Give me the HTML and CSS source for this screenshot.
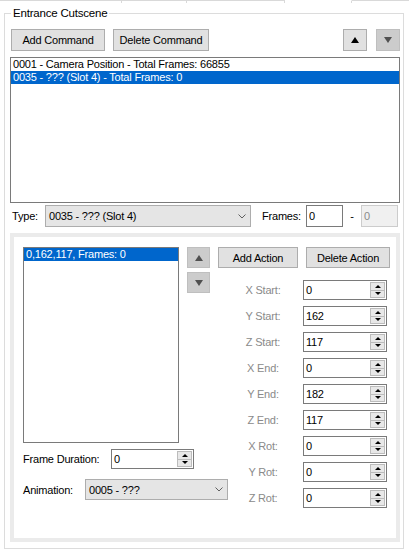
FILE: index.html
```html
<!DOCTYPE html>
<html lang="en">
<head>
    <meta charset="UTF-8">
    <meta name="viewport" content="width=device-width, initial-scale=1.0">
    <title>Entrance Cutscene</title>
    <link rel="stylesheet" href="styles.css">
</head>
<body>

    <!-- bottoms of the tab headers above the page -->
    <div class="tabs">
        <div class="tab tab-1"></div>
        <div class="tab tab-2"></div>
        <div class="tab tab-3"></div>
        <div class="tab tab-active"></div>
        <div class="tab tab-last"></div>
    </div>

    <fieldset class="group">
        <legend>Entrance Cutscene</legend>

        <div class="toolbar">
            <button class="btn btn-add-cmd">Add Command</button>
            <button class="btn btn-del-cmd">Delete Command</button>
            <div class="spacer"></div>
            <button class="arrow-btn"><span class="tri-up"></span></button>
            <button class="arrow-btn arrow-last disabled"><span class="tri-down"></span></button>
        </div>

        <div class="listbox command-list">
            <div class="item">0001 - Camera Position - Total Frames: 66855</div>
            <div class="item selected">0035 - ??? (Slot 4) - Total Frames: 0</div>
        </div>

        <div class="type-row">
            <span class="type-lbl">Type:</span>
            <div class="combo type-combo">
                <span>0035 - ??? (Slot 4)</span>
                <svg class="chevron" width="8" height="5" viewBox="0 0 8 5"><polyline points="0.5,0.5 4,4 7.5,0.5" fill="none" stroke="#606060" stroke-width="1"/></svg>
            </div>
            <span class="frames-lbl">Frames:</span>
            <input class="textbox" type="text" value="0">
            <span class="dash">-</span>
            <input class="textbox" type="text" value="0" disabled>
        </div>

        <!-- action editor -->
        <div class="panel">
            <div class="panel-left">
                <div class="action-top">
                    <div class="listbox action-list">
                        <div class="item selected">0,162,117, Frames: 0</div>
                    </div>
                    <div class="arrows">
                        <button class="arrow-btn small disabled"><span class="tri-up"></span></button>
                        <button class="arrow-btn small disabled"><span class="tri-down"></span></button>
                    </div>
                </div>

                <div class="frame-row">
                    <span class="row-lbl frame-lbl">Frame Duration:</span>
                    <div class="spin frame-spin">
                        <span class="spin-val">0</span>
                        <span class="spin-btns"><span class="spin-up"></span><span class="spin-down"></span></span>
                    </div>
                </div>

                <div class="anim-row">
                    <span class="row-lbl anim-lbl">Animation:</span>
                    <div class="combo anim-combo">
                        <span>0005 - ???</span>
                        <svg class="chevron" width="8" height="5" viewBox="0 0 8 5"><polyline points="0.5,0.5 4,4 7.5,0.5" fill="none" stroke="#606060" stroke-width="1"/></svg>
                    </div>
                </div>
            </div>

            <div class="panel-right">
                <div class="action-buttons">
                    <button class="btn btn-add-act">Add Action</button>
                    <button class="btn btn-del-act">Delete Action</button>
                </div>

                <div class="fields">
                    <span class="field-lbl">X Start:</span>
                    <div class="spin"><span class="spin-val">0</span><span class="spin-btns"><span class="spin-up"></span><span class="spin-down"></span></span></div>
                    <span class="field-lbl">Y Start:</span>
                    <div class="spin"><span class="spin-val">162</span><span class="spin-btns"><span class="spin-up"></span><span class="spin-down"></span></span></div>
                    <span class="field-lbl">Z Start:</span>
                    <div class="spin"><span class="spin-val">117</span><span class="spin-btns"><span class="spin-up"></span><span class="spin-down"></span></span></div>
                    <span class="field-lbl">X End:</span>
                    <div class="spin"><span class="spin-val">0</span><span class="spin-btns"><span class="spin-up"></span><span class="spin-down"></span></span></div>
                    <span class="field-lbl">Y End:</span>
                    <div class="spin"><span class="spin-val">182</span><span class="spin-btns"><span class="spin-up"></span><span class="spin-down"></span></span></div>
                    <span class="field-lbl">Z End:</span>
                    <div class="spin"><span class="spin-val">117</span><span class="spin-btns"><span class="spin-up"></span><span class="spin-down"></span></span></div>
                    <span class="field-lbl">X Rot:</span>
                    <div class="spin"><span class="spin-val">0</span><span class="spin-btns"><span class="spin-up"></span><span class="spin-down"></span></span></div>
                    <span class="field-lbl">Y Rot:</span>
                    <div class="spin"><span class="spin-val">0</span><span class="spin-btns"><span class="spin-up"></span><span class="spin-down"></span></span></div>
                    <span class="field-lbl">Z Rot:</span>
                    <div class="spin"><span class="spin-val">0</span><span class="spin-btns"><span class="spin-up"></span><span class="spin-down"></span></span></div>
                </div>
            </div>
        </div>
    </fieldset>

</body>
</html>
```

FILE: styles.css
```css
* {
    box-sizing: border-box;
}

body {
    margin: 0;
    width: 409px;
    height: 552px;
    overflow: hidden;
    background-color: #fff;
    font-family: "Liberation Sans", Arial, sans-serif;
    font-size: 11px;
    letter-spacing: -0.2px;
    color: #000;
}

/* Tab header stubs */
.tabs {
    display: flex;
    height: 3px;
}

.tab {
    border-top: 1px solid #d9d9d9;
    border-right: 1px solid #d9d9d9;
}

.tab-1 { width: 122px; }
.tab-2 { width: 65px; }
.tab-3 { width: 98px; }

.tab-active {
    width: 67px;
    border-top-color: transparent;
}

.tab-last {
    flex: 1;
    border-right: none;
}

/* Group box */
.group {
    margin: 3px 5px 0 4px;
    padding: 9px 3px 6px 6px;
    border: 1px solid #dcdcdc;
    min-width: 0;
}

.group legend {
    padding: 0 2px;
    line-height: 14px;
    font-size: 11.5px;
}

/* Buttons */
.btn {
    height: 22px;
    padding: 0;
    border: 1px solid #adadad;
    background-color: #e1e1e1;
    font: inherit;
    letter-spacing: inherit;
    color: #000;
}

.toolbar {
    display: flex;
    gap: 8px;
    height: 22px;
}

.btn-add-cmd { width: 94px; }
.btn-del-cmd { width: 96px; }

.spacer {
    flex: 1;
}

.arrow-btn {
    width: 24px;
    height: 22px;
    padding: 0;
    border: 1px solid #adadad;
    background-color: #e1e1e1;
    display: flex;
    align-items: center;
    justify-content: center;
}

.arrow-last {
    margin-left: 1px;
}

.arrow-btn.disabled {
    background-color: #cccccc;
    border-color: #bfbfbf;
}

.arrow-btn.small {
    width: 23px;
    height: 21px;
}

.tri-up {
    width: 0;
    height: 0;
    border-left: 4px solid transparent;
    border-right: 4px solid transparent;
    border-bottom: 6px solid #000;
}

.tri-down {
    width: 0;
    height: 0;
    border-left: 4px solid transparent;
    border-right: 4px solid transparent;
    border-top: 6px solid #000;
}

.disabled .tri-up { border-bottom-color: #505050; }
.disabled .tri-down { border-top-color: #505050; }

/* List boxes */
.listbox {
    border: 1px solid #7a7a7a;
    background-color: #fff;
    overflow: hidden;
}

.item {
    height: 13px;
    line-height: 13px;
    padding-left: 2px;
    white-space: nowrap;
}

.item.selected {
    background-color: #0066cc;
    color: #fff;
}

.command-list {
    margin-top: 6px;
    margin-left: -1px;
    height: 146px;
}

/* Type row */
.type-row {
    display: flex;
    align-items: center;
    margin-top: 2px;
    height: 22px;
}

.type-lbl {
    width: 34px;
    padding-left: 1px;
}

.combo {
    display: flex;
    align-items: center;
    justify-content: space-between;
    height: 22px;
    padding: 0 4px 0 3px;
    border: 1px solid #adadad;
    background-color: #e5e5e5;
}

.type-combo {
    width: 206px;
}

.frames-lbl {
    width: 44px;
    margin-left: 11px;
}

.textbox {
    width: 37px;
    height: 22px;
    padding: 0 2px;
    border: 1px solid #7a7a7a;
    font: inherit;
    letter-spacing: inherit;
    color: #000;
    background-color: #fff;
    outline: none;
}

.textbox:disabled {
    border-color: #cccccc;
    background-color: #f0f0f0;
    color: #8a8a8a;
}

.dash {
    width: 18px;
    text-align: center;
}

/* Action panel */
.panel {
    display: flex;
    gap: 7px;
    margin-top: 6px;
    margin-left: -1px;
    height: 309px;
    border: 4px solid #ebebeb;
    padding: 10px 9px;
}

.panel-left {
    width: 188px;
    flex-shrink: 0;
}

.action-top {
    display: flex;
    gap: 8px;
}

.action-list {
    width: 156px;
    height: 196px;
}

.arrows {
    display: flex;
    flex-direction: column;
    gap: 4px;
}

.frame-row,
.anim-row {
    display: flex;
    align-items: center;
    white-space: nowrap;
}

.row-lbl {
    flex-shrink: 0;
}

.frame-row {
    margin-top: 6px;
}

.frame-lbl {
    width: 88px;
}

.frame-spin {
    width: 83px;
    flex-shrink: 0;
}

.anim-row {
    margin-top: 10px;
}

.anim-lbl {
    width: 62px;
}

.anim-combo {
    width: 143px;
    height: 21px;
    flex-shrink: 0;
}

.action-buttons {
    display: flex;
    gap: 8px;
}

.action-buttons .btn {
    height: 21px;
}

.btn-add-act { width: 80px; }
.btn-del-act { width: 84px; }

/* captions sit centred in the column left of the boxes */
.fields {
    display: grid;
    grid-template-columns: 85px 84px;
    row-gap: 6px;
    margin-top: 12px;
    align-items: center;
}

.field-lbl {
    padding-left: 5px;
    text-align: center;
    color: #8a8a8a;
}

/* Numeric up/down boxes */
.spin {
    display: flex;
    align-items: stretch;
    height: 20px;
    border: 1px solid #7a7a7a;
    background-color: #fff;
}

.spin-val {
    flex: 1;
    padding-left: 2px;
    line-height: 18px;
}

.spin-btns {
    display: flex;
    flex-direction: column;
    width: 15px;
    margin: 1px 1px 1px 0;
    border: 1px solid #bcbcbc;
    background-color: #e8e8e8;
}

.spin-up,
.spin-down {
    flex: 1;
    display: flex;
    align-items: center;
    justify-content: center;
}

.spin-down {
    border-top: 1px solid #bcbcbc;
}

.spin-up::after {
    content: "";
    border-left: 3px solid transparent;
    border-right: 3px solid transparent;
    border-bottom: 3px solid #000;
}

.spin-down::after {
    content: "";
    border-left: 3px solid transparent;
    border-right: 3px solid transparent;
    border-top: 3px solid #000;
}
```
